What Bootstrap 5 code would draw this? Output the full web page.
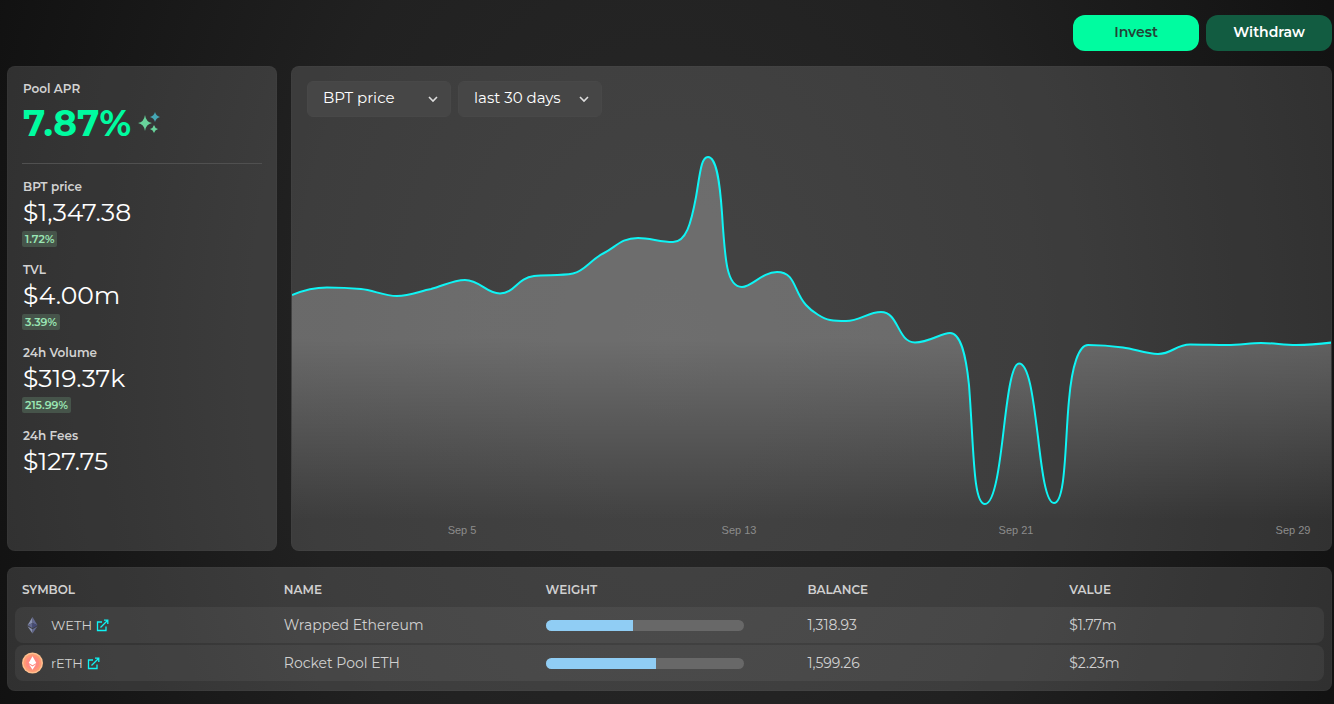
<!DOCTYPE html>
<html lang="en" data-bs-theme="dark">
<head>
<meta charset="utf-8">
<meta name="viewport" content="width=device-width, initial-scale=1">
<title>Pool overview</title>
<link href="https://cdn.jsdelivr.net/npm/bootstrap@5.3.0/dist/css/bootstrap.min.css" rel="stylesheet">
<style>
  body {
    min-height: 100vh;
    padding: 15px 2px 13px 7px;
    font-family: Montserrat, Inter, "Open Sans", sans-serif;
    font-size: 14px;
    line-height: 20px;
    color: #fff;
    background: #101010 radial-gradient(ellipse 56% 150% at center, #282828 0%, #212121 50%, #101010 100%) no-repeat;
  }
  .panel {
    background: rgba(255, 255, 255, .13);
    border: 1px solid rgba(255, 255, 255, .02);
    border-radius: 8px;
    overflow: hidden;
  }
  .actions { gap: 7px; margin-bottom: 15px; }
  .action {
    width: 126px; height: 36px; padding: 0 0 2px;
    border: 0; border-radius: 12px;
    font-size: 14px; font-weight: 600;
  }
  .action-invest, .action-invest:hover { background: #00fca0; color: #234236; }
  .action-withdraw, .action-withdraw:hover { background: #125c41; color: #fff; }
  .overview { gap: 14px; margin-bottom: 16px; }
  .stats { flex: 0 0 270px; padding: 12px 14px; }
  .stat-label { padding-left: 1px; font-size: 12px; font-weight: 600; color: #d2d2d2; }
  .stat-value { padding-left: 1px; font-size: 25px; line-height: 30px; font-weight: 400; }
  .apr { padding-left: 1px; font-size: 36px; line-height: 48px; font-weight: 700; color: #00fca0; gap: 7px; }
  .rule { margin: 16px 0 13px; border-top: 1px solid #505050; opacity: 1; }
  .stat { margin-bottom: 13px; }
  .change {
    display: block; width: fit-content; margin-top: 4px; padding: 0 3px;
    border-radius: 2px; background: #46544a; color: #9ae6b4;
    font-size: 11px; line-height: 16px; font-weight: 600;
  }
  .chart { min-width: 0; }
  .chart svg { display: block; width: 100%; height: auto; }
  .filters { top: 14px; left: 15px; gap: 7px; }
  .filters .form-select {
    width: 144px; height: 36px; padding: 0 36px 2px 15px;
    border: 1px solid #484848; border-radius: 6px;
    background-color: #464646; color: #fff; font-size: 15px;
    background-size: 12px 12px; background-position: right 11px center;
    background-image: url("data:image/svg+xml,%3csvg xmlns='http://www.w3.org/2000/svg' viewBox='0 0 12 12'%3e%3cpath fill='none' stroke='%23ddd' stroke-width='1.6' d='M2 4l4 4 4-4'/%3e%3c/svg%3e");
  }
  .holdings { padding: 7px; }
  .holdings table {
    width: 100%; table-layout: fixed; color: #d0d0d0;
    border-collapse: separate; border-spacing: 0 2px; margin-top: -2px;
  }
  .holdings th { height: 30px; padding: 0 7px; font-size: 12px; font-weight: 600; text-transform: uppercase; }
  .holdings td { height: 36px; padding: 0 7px; background: rgba(255, 255, 255, .055); }
  .holdings td:first-child { border-radius: 8px 0 0 8px; }
  .holdings td:last-child { border-radius: 0 8px 8px 0; }
  .symbol { font-size: 13px; color: #d0d0d0; }
  .holdings .progress { width: 198px; max-width: 100%; height: 11px; border-radius: 6px; background: #686868; }
  .holdings .progress-bar { background: #90cdf4; }
</style>
</head>
<body>
<header class="actions d-flex justify-content-end">
  <button type="button" class="btn action action-invest">Invest</button>
  <button type="button" class="btn action action-withdraw">Withdraw</button>
</header>

<main>
  <div class="overview d-flex">
    <aside class="panel stats">
      <div class="stat-label">Pool APR</div>
      <div class="apr d-flex align-items-center">7.87%
        <svg width="22" height="22" viewBox="0 0 22 22" aria-hidden="true">
          <g fill="#68d39b">
            <path d="M7 3Q8 10 14 11Q8 12 7 19Q6 12 0 11Q6 10 7 3Z"/>
            <path d="M16 13Q16.800 16.200 20 17Q16.800 17.800 16 21Q15.200 17.800 12 17Q15.200 16.200 16 13Z"/>
          </g>
          <path fill="#45a6b5" d="M17 0Q18 4 22 5Q18 6 17 10Q16 6 12 5Q16 4 17 0Z"/>
        </svg>
      </div>
      <hr class="rule">
      <div class="stat"><div class="stat-label">BPT price</div><div class="stat-value">$1,347.38</div><span class="change">1.72%</span></div>
      <div class="stat"><div class="stat-label">TVL</div><div class="stat-value">$4.00m</div><span class="change">3.39%</span></div>
      <div class="stat"><div class="stat-label">24h Volume</div><div class="stat-value">$319.37k</div><span class="change">215.99%</span></div>
      <div><div class="stat-label">24h Fees</div><div class="stat-value">$127.75</div></div>
    </aside>

    <section class="panel chart position-relative flex-grow-1">
      <svg viewBox="292 67 1039 483" role="img" aria-label="BPT price over the last 30 days">
        <defs>
          <linearGradient id="fade" gradientUnits="userSpaceOnUse" x1="0" y1="157" x2="0" y2="520">
            <stop offset="0" stop-color="#fff" stop-opacity=".23"/>
            <stop offset=".5" stop-color="#fff" stop-opacity=".23"/>
            <stop offset="1" stop-color="#fff" stop-opacity="0"/>
          </linearGradient>
          <path id="price" d="M292 295C304 290 315 287.500 327 287.500C338 287.500 350 288 361 289C373 290 384 296 397 296C410 296 420 291 431 289C443 286 453 280 465 280C480 280 486 293.500 500 293.500C515 293 517 278 534 276C546 274.500 560 276 573 273.500C585 271 590 260 604 253C616 247 621 238 638 238C650 238 660 242 673 242C686 242 691 224 696 197C700 174 701 157 708 157C717 157 720 185 722 213C725 262 727 287 742 287C752 287 762 272 777 272C796 272 793 291 806 305C812 312 824 319 830 320C836 321 841 321 846 321C860 321 868 312 881 312C899 312 897 342 915 342.500C929 342.500 941 333 950 333C961 333 966 356 969 385C974 450 973 504 985 504C995 504 1000 462 1004 427C1008 393 1012 363.500 1019 363.500C1030 363.500 1034 407 1038 437C1042 472 1046 503 1054 503C1066 503 1065 440 1069 400C1072 365 1079 345 1088 345C1100 345 1112 346 1123 347.500C1135 349 1146 354 1158 354C1172 354 1176 344.500 1190 344.500C1203 344.500 1215 345 1227 345C1240 345 1250 343 1261 343C1273 343 1284 345 1296 345C1308 345 1320 344 1332 342.500"/>
        </defs>
        <path fill="url(#fade)" d="M292 295C304 290 315 287.500 327 287.500C338 287.500 350 288 361 289C373 290 384 296 397 296C410 296 420 291 431 289C443 286 453 280 465 280C480 280 486 293.500 500 293.500C515 293 517 278 534 276C546 274.500 560 276 573 273.500C585 271 590 260 604 253C616 247 621 238 638 238C650 238 660 242 673 242C686 242 691 224 696 197C700 174 701 157 708 157C717 157 720 185 722 213C725 262 727 287 742 287C752 287 762 272 777 272C796 272 793 291 806 305C812 312 824 319 830 320C836 321 841 321 846 321C860 321 868 312 881 312C899 312 897 342 915 342.500C929 342.500 941 333 950 333C961 333 966 356 969 385C974 450 973 504 985 504C995 504 1000 462 1004 427C1008 393 1012 363.500 1019 363.500C1030 363.500 1034 407 1038 437C1042 472 1046 503 1054 503C1066 503 1065 440 1069 400C1072 365 1079 345 1088 345C1100 345 1112 346 1123 347.500C1135 349 1146 354 1158 354C1172 354 1176 344.500 1190 344.500C1203 344.500 1215 345 1227 345C1240 345 1250 343 1261 343C1273 343 1284 345 1296 345C1308 345 1320 344 1332 342.500V520H292Z"/>
        <use href="#price" fill="none" stroke="#0ff4f4" stroke-width="2"/>
        <g font-family="Liberation Sans, sans-serif" font-size="11" fill="#8c8c8c" text-anchor="middle">
          <text x="462" y="534">Sep 5</text>
          <text x="739" y="534">Sep 13</text>
          <text x="1016" y="534">Sep 21</text>
          <text x="1293" y="534">Sep 29</text>
        </g>
      </svg>
      <div class="filters position-absolute d-flex">
        <select class="form-select" aria-label="Metric"><option>BPT price</option><option>TVL</option><option>Volume</option></select>
        <select class="form-select" aria-label="Period"><option>last 30 days</option><option>last 90 days</option></select>
      </div>
    </section>
  </div>

  <section class="panel holdings">
    <table>
      <thead><tr><th>Symbol</th><th>Name</th><th>Weight</th><th>Balance</th><th>Value</th></tr></thead>
      <tbody>
        <tr>
          <td><div class="symbol d-flex align-items-center">
            <svg class="me-2" width="21" height="22" viewBox="0 0 21 22" aria-hidden="true">
              <path fill="#8a92b2" d="M10.500 3L5.500 11.300L10.500 9Z"/><path fill="#62688f" d="M10.500 3L15.500 11.300L10.500 9Z"/>
              <path fill="#62688f" d="M5.500 11.300L10.500 9V14.200Z"/><path fill="#454a75" d="M15.500 11.300L10.500 9V14.200Z"/>
              <path fill="#8a92b2" d="M5.500 12.300L10.500 15.200V19.500Z"/><path fill="#62688f" d="M15.500 12.300L10.500 15.200V19.500Z"/>
            </svg>WETH
            <a href="#weth" class="d-flex ms-1" aria-label="View WETH"><svg width="13" height="13" viewBox="0 0 13 13" fill="none" stroke="#0ff4f4" stroke-width="1.300"><path d="M6 3H1.500V11.500H10V7.500M4.500 8.500L11.500 1.500M8 1.200H11.800V5"/></svg></a>
          </div></td>
          <td>Wrapped Ethereum</td>
          <td><div class="progress" role="progressbar" aria-label="WETH weight" aria-valuenow="44" aria-valuemin="0" aria-valuemax="100"><div class="progress-bar" style="width:44%"></div></div></td>
          <td>1,318.93</td><td>$1.77m</td>
        </tr>
        <tr>
          <td><div class="symbol d-flex align-items-center">
            <svg class="me-2" width="21" height="22" viewBox="0 0 22 22" aria-hidden="true">
              <circle cx="11" cy="11" r="11" fill="#ffc08f"/><circle cx="11" cy="11" r="9.500" fill="#ff9a75"/><circle cx="11" cy="11" r="7" fill="#ff8a80"/>
              <path fill="#fff" d="M11 4L15 11L11 13.300L7 11ZM7.300 12.400L11 14.600L14.700 12.400L11 18Z"/>
            </svg>rETH
            <a href="#reth" class="d-flex ms-1" aria-label="View rETH"><svg width="13" height="13" viewBox="0 0 13 13" fill="none" stroke="#0ff4f4" stroke-width="1.300"><path d="M6 3H1.500V11.500H10V7.500M4.500 8.500L11.500 1.500M8 1.200H11.800V5"/></svg></a>
          </div></td>
          <td>Rocket Pool ETH</td>
          <td><div class="progress" role="progressbar" aria-label="rETH weight" aria-valuenow="56" aria-valuemin="0" aria-valuemax="100"><div class="progress-bar" style="width:55.600%"></div></div></td>
          <td>1,599.26</td><td>$2.23m</td>
        </tr>
      </tbody>
    </table>
  </section>
</main>
<script src="https://cdn.jsdelivr.net/npm/bootstrap@5.3.0/dist/js/bootstrap.bundle.min.js"></script>
</body>
</html>
